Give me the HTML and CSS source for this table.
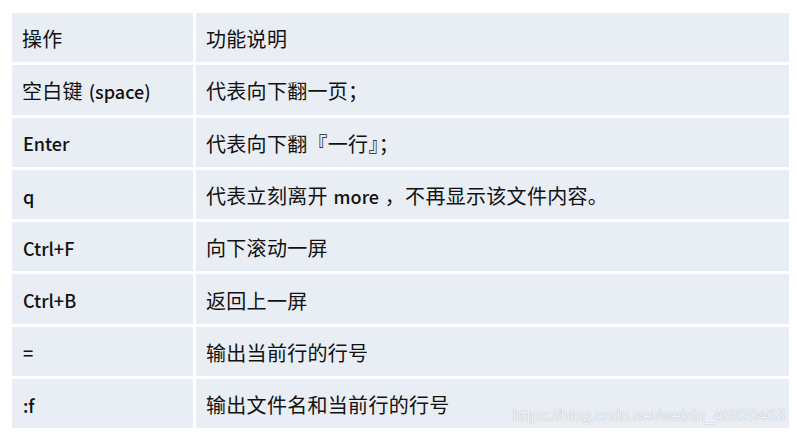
FILE: index.html
```html
<!DOCTYPE html>
<html lang="zh-CN">
<head>
<meta charset="utf-8">
<title>more 命令</title>
<link rel="stylesheet" href="styles.css">
</head>
<body>
<div class="page">
  <div class="table">
    <div class="cell key">操作</div><div class="cell desc">功能说明</div>
    <div class="cell key">空白键 <span class="lat">(space)</span></div><div class="cell desc">代表向下翻一页；</div>
    <div class="cell key"><span class="lat">Enter</span></div><div class="cell desc">代表向下翻『一行』；</div>
    <div class="cell key"><span class="lat">q</span></div><div class="cell desc">代表立刻离开 <span class="lat">more</span> ，不再显示该文件内容。</div>
    <div class="cell key"><span class="lat">Ctrl+F</span></div><div class="cell desc">向下滚动一屏</div>
    <div class="cell key"><span class="lat">Ctrl+B</span></div><div class="cell desc">返回上一屏</div>
    <div class="cell key"><span class="lat">=</span></div><div class="cell desc">输出当前行的行号</div>
    <div class="cell key"><span class="lat">:f</span></div><div class="cell desc">输出文件名和当前行的行号</div>
  </div>
  <div class="watermark">https://blog.csdn.net/weixin_46820463</div>
</div>
</body>
</html>
```
FILE: styles.css
```css
html, body {
  margin: 0;
  padding: 0;
  background: #ffffff;
}
.page {
  position: relative;
  width: 796px;
  height: 437px;
  padding: 13px 0 0 12px;
  box-sizing: border-box;
}
.table {
  display: grid;
  grid-template-columns: 181px 593px;
  grid-auto-rows: 49.3px;
  column-gap: 3px;
  row-gap: 3px;
  width: 777px;
}
.cell {
  background: #e9edf4;
  display: flex;
  align-items: center;
  padding-top: 2px;
  box-sizing: border-box;
  font-family: "Noto Sans CJK SC", sans-serif;
  font-size: 20px;
  letter-spacing: 0.3px;
  color: #111111;
  white-space: pre;
}
.lat {
  font-size: 18px;
  font-weight: 500;
  letter-spacing: 0;
  margin: 0 1px;
}
.key {
  padding-left: 10px;
}
.desc {
  padding-left: 10px;
}
.watermark {
  position: absolute;
  right: 11px;
  top: 407px;
  font-family: "Liberation Sans", Arial, sans-serif;
  font-size: 16px;
  color: #f4f6f9;
  text-shadow: 0 0 1px #9aa0a8;
  white-space: nowrap;
}
```
